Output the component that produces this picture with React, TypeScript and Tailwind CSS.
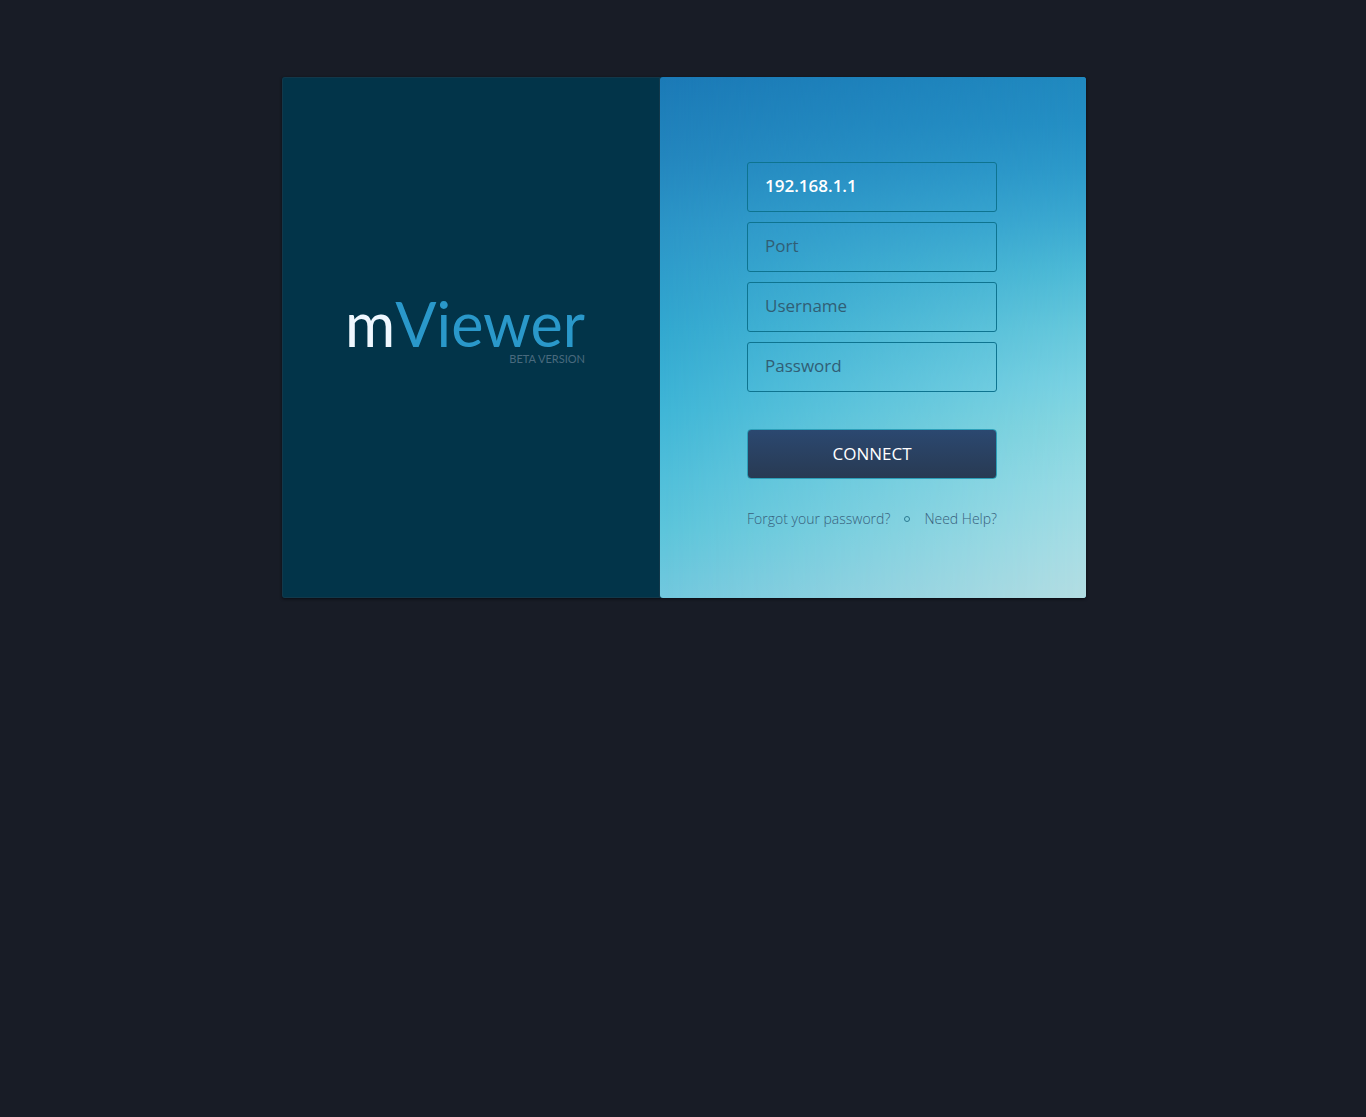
const fields = [
  { id: "host", label: "Host", type: "text", value: "192.168.1.1" },
  { id: "port", label: "Port", type: "text", value: "" },
  { id: "username", label: "Username", type: "text", value: "" },
  { id: "password", label: "Password", type: "password", value: "" },
];

function Logo() {
  return (
    <div className="flex flex-col items-end font-[Lato,sans-serif]">
      <h1 className="flex items-baseline text-[61px] leading-[54px] text-[#2a98ca]">
        <span className="text-[#f0f8ff]">m</span>
        <span>Viewer</span>
      </h1>
      <p className="text-[11px] leading-4 text-[#496a7e]">BETA VERSION</p>
    </div>
  );
}

function LoginForm() {
  return (
    <form className="relative flex w-[250px] flex-col" onSubmit={(e) => e.preventDefault()}>
      <div className="flex flex-col gap-[10px]">
        {fields.map((f) => (
          <input
            key={f.id}
            id={f.id}
            aria-label={f.label}
            type={f.type}
            defaultValue={f.value}
            placeholder={f.label}
            className="block h-[50px] w-full rounded-[3px] border border-[#0e7490] bg-transparent px-[17px] pb-1 text-[17px] font-semibold text-white outline-none placeholder:font-normal placeholder:text-[#315e75]"
          />
        ))}
      </div>
      <button
        type="submit"
        className="mt-[37px] h-[50px] rounded border border-[#2c9fb9] bg-linear-to-b from-[#2b4870] to-[#283a53] text-[17px] text-white"
      >
        CONNECT
      </button>
      <div className="mt-[30px] flex items-center justify-between text-sm leading-5 font-light whitespace-nowrap text-[#37607c]">
        <a href="#forgot">Forgot your password?</a>
        <span className="size-[6px] rounded-full border border-[#2b7a92]" />
        <a href="#help">Need Help?</a>
      </div>
    </form>
  );
}

export default function App() {
  return (
    <main className="flex min-h-screen items-start justify-center bg-[#181c26] pt-[77px] pb-10 pl-0.5 font-['Open_Sans',sans-serif]">
      <div className="grid w-full max-w-[804px] grid-cols-[378fr_426fr] rounded-[3px] bg-[#023449] shadow-[0_1px_3px_#0a0d14]">
        <section className="flex items-center justify-center rounded-l-[3px] border border-[#12384a] pr-3 pb-3">
          <Logo />
        </section>
        <section className="relative flex justify-center overflow-hidden rounded-[3px] bg-[linear-gradient(180deg,#1b7ab7_0%,#2386be_15%,#2c96c8_29%,#32a8d0_48%,#3fb6d7_64%,#50bfda_77%,#5cc5db_87%,#72c8de_100%)] pt-[85px] pr-0.5 pb-[69px]">
          <div
            aria-hidden="true"
            className="absolute inset-0 bg-[linear-gradient(180deg,#2089bf_0%,#248fc4_9%,#2d9aca_18%,#3caad1_28%,#4dbad6_37%,#66c8dc_48%,#7bd2e2_59%,#88d7e0_67%,#98dbe4_78%,#a9dde4_91%,#b3dde2_100%)] mask-[linear-gradient(90deg,transparent,black)]"
          />
          <LoginForm />
        </section>
      </div>
    </main>
  );
}
